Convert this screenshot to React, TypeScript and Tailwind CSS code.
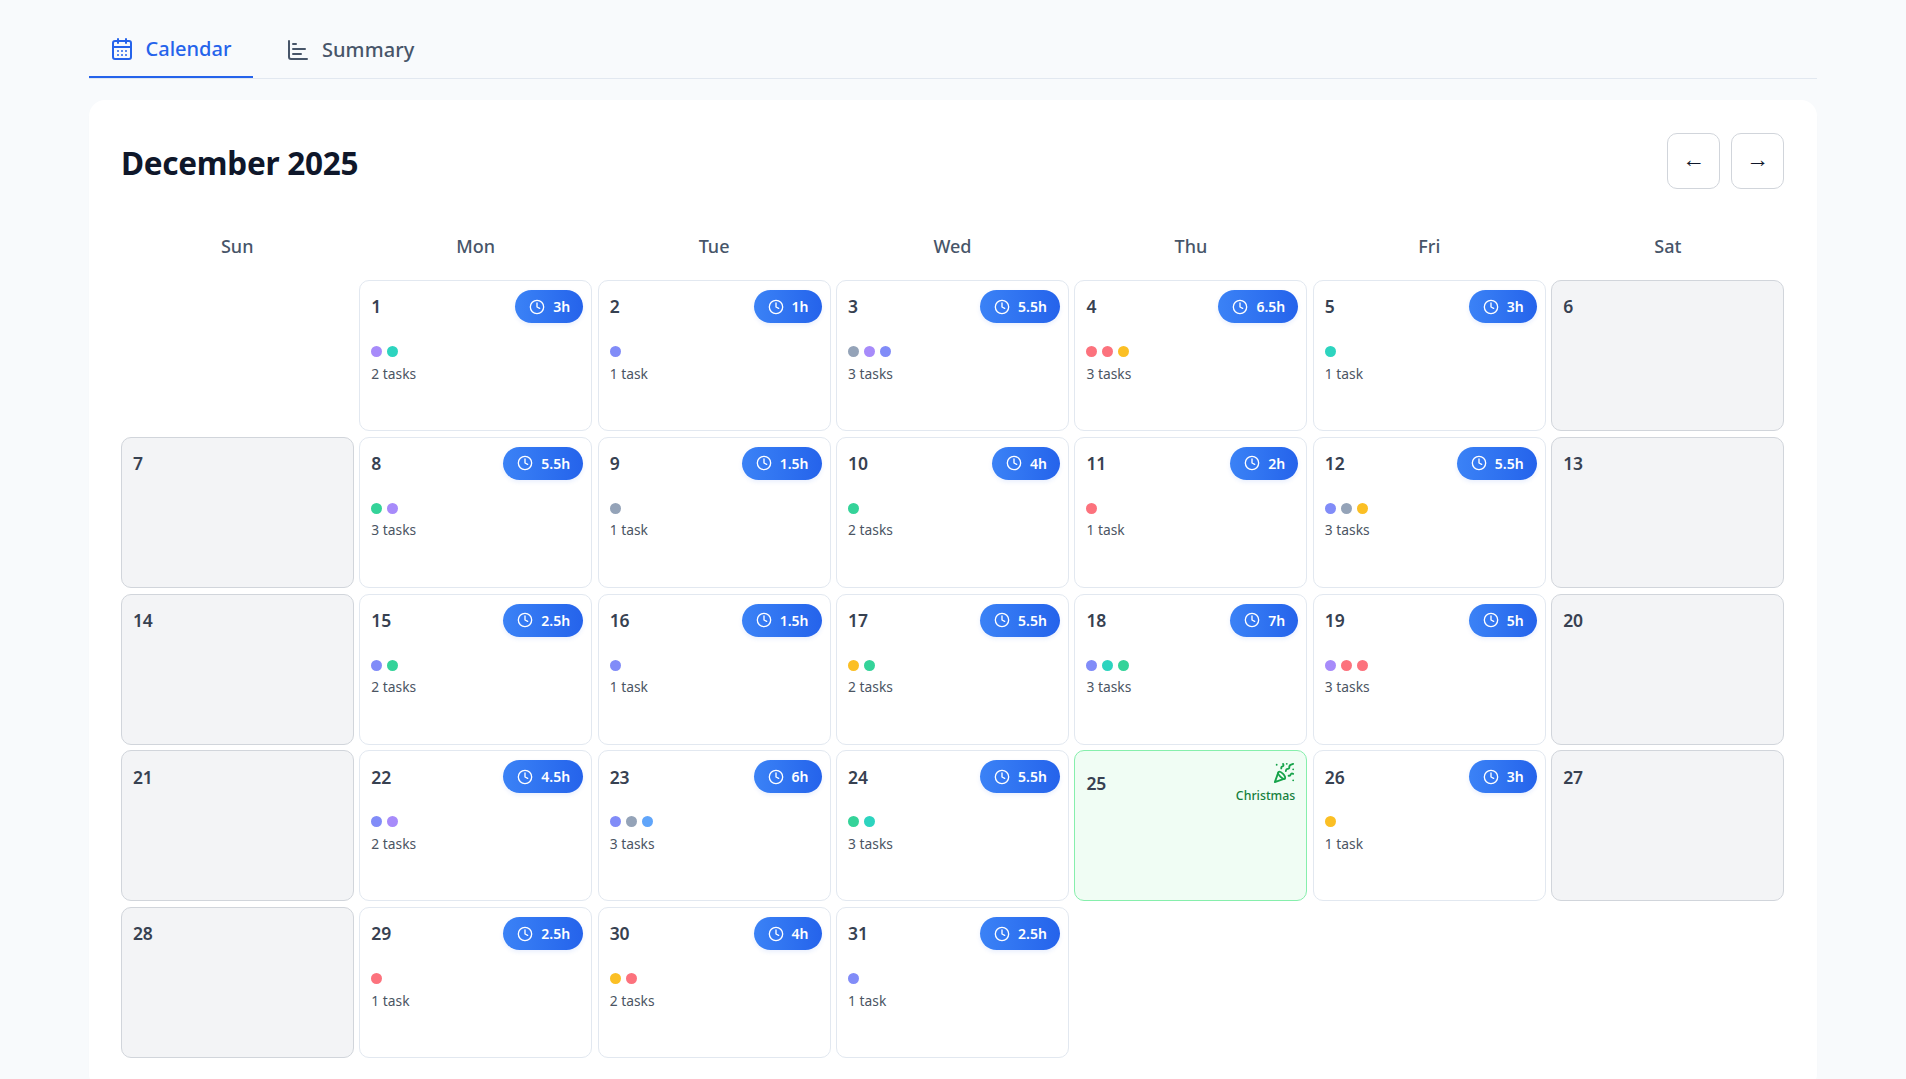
import { CalendarDays, ChartBar, Clock, PartyPopper } from "lucide-react";

// --- Types ---
type Day = {
  hours: string;
  tasks: number;
  dots: string[];
};

const PURPLE = "bg-[#a78bfa]";
const TEAL = "bg-[#2dd4bf]";
const INDIGO = "bg-[#818cf8]";
const GRAY = "bg-[#94a3b8]";
const RED = "bg-[#fc727d]";
const AMBER = "bg-[#fbbf24]";
const GREEN = "bg-[#34d399]";
const BLUE = "bg-[#60a5fa]";

const WEEKDAYS = ["Sun", "Mon", "Tue", "Wed", "Thu", "Fri", "Sat"];

const DAYS: Record<number, Day> = {
  1: { hours: "3h", tasks: 2, dots: [PURPLE, TEAL] },
  2: { hours: "1h", tasks: 1, dots: [INDIGO] },
  3: { hours: "5.5h", tasks: 3, dots: [GRAY, PURPLE, INDIGO] },
  4: { hours: "6.5h", tasks: 3, dots: [RED, RED, AMBER] },
  5: { hours: "3h", tasks: 1, dots: [TEAL] },
  8: { hours: "5.5h", tasks: 3, dots: [GREEN, PURPLE] },
  9: { hours: "1.5h", tasks: 1, dots: [GRAY] },
  10: { hours: "4h", tasks: 2, dots: [GREEN] },
  11: { hours: "2h", tasks: 1, dots: [RED] },
  12: { hours: "5.5h", tasks: 3, dots: [INDIGO, GRAY, AMBER] },
  15: { hours: "2.5h", tasks: 2, dots: [INDIGO, GREEN] },
  16: { hours: "1.5h", tasks: 1, dots: [INDIGO] },
  17: { hours: "5.5h", tasks: 2, dots: [AMBER, GREEN] },
  18: { hours: "7h", tasks: 3, dots: [INDIGO, TEAL, GREEN] },
  19: { hours: "5h", tasks: 3, dots: [PURPLE, RED, RED] },
  22: { hours: "4.5h", tasks: 2, dots: [INDIGO, PURPLE] },
  23: { hours: "6h", tasks: 3, dots: [INDIGO, GRAY, BLUE] },
  24: { hours: "5.5h", tasks: 3, dots: [GREEN, TEAL] },
  26: { hours: "3h", tasks: 1, dots: [AMBER] },
  29: { hours: "2.5h", tasks: 1, dots: [RED] },
  30: { hours: "4h", tasks: 2, dots: [AMBER, RED] },
  31: { hours: "2.5h", tasks: 1, dots: [INDIGO] },
};

const HoursBadge = ({ hours }: { hours: string }) => (
  <div className="flex h-[33px] items-center gap-[8px] rounded-full bg-gradient-to-r from-[#3b82f6] to-[#2563eb] pl-[14px] pr-[13px] text-[14px] font-semibold text-white shadow-[0_2px_4px_rgba(37,99,235,0.1)]">
    <Clock className="h-[16px] w-[16px]" strokeWidth={2} />
    <span>{hours}</span>
  </div>
);

const WorkCell = ({ date, day }: { date: number; day: Day }) => (
  <div className="rounded-[10px] border border-[#e2e8f0] bg-white pl-[11px] pr-[8px] pt-[9px]">
    <div className="flex items-center justify-between">
      <span className="text-[17.5px] font-semibold tracking-[-0.2px] text-[#374151]">{date}</span>
      <HoursBadge hours={day.hours} />
    </div>
    <div className="mt-[23px] flex gap-[5px]">
      {day.dots.map((dot, i) => (
        <span key={i} className={`h-[11px] w-[11px] rounded-full ${dot}`} />
      ))}
    </div>
    <div className="mt-[6.5px] text-[13.8px] leading-[20px] text-[#4b5563]">
      {day.tasks} {day.tasks === 1 ? "task" : "tasks"}
    </div>
  </div>
);

const WeekendCell = ({ date }: { date: number }) => (
  <div className="rounded-[10px] border border-[#d1d5db] bg-[#f3f4f6] pl-[11px] pt-[9px]">
    <div className="flex h-[33px] items-center text-[17.5px] font-semibold tracking-[-0.2px] text-[#374151]">{date}</div>
  </div>
);

const HolidayCell = ({ date, name }: { date: number; name: string }) => (
  <div className="rounded-[10px] border border-[#86efac] bg-[#f0fdf4] px-[11px] pt-[11px]">
    <div className="flex items-center justify-between">
      <span className="text-[17.5px] font-semibold tracking-[-0.2px] text-[#374151]">{date}</span>
      <div className="flex flex-col items-end">
        <PartyPopper className="mb-[4px] h-[22px] w-[22px] text-[#16a34a]" strokeWidth={2} />
        <span className="text-[12.3px] font-medium leading-[16px] text-[#15803d]">{name}</span>
      </div>
    </div>
  </div>
);

export default function App() {
  const blanks = [0];
  const dates = Array.from({ length: 31 }, (_, i) => i + 1);

  return (
    <div className="h-screen overflow-hidden bg-[#f8fafc] px-[89px] font-['Noto_Sans',sans-serif]">
      {/* --- TABS --- */}
      <div className="flex h-[79px] items-stretch gap-[12px] border-b border-[#e2e8f0] pt-[22px]">
        <button className="flex items-center gap-[11.5px] border-b-2 border-[#2563eb] pl-[21px] pr-[21.5px] text-[20px] font-medium text-[#2563eb]">
          <CalendarDays className="h-[24px] w-[24px]" strokeWidth={2} />
          Calendar
        </button>
        <button className="flex items-center gap-[12px] px-[21px] text-[20px] font-medium tracking-[0.1px] text-[#475569]">
          <ChartBar className="h-[24px] w-[24px]" strokeWidth={2} />
          Summary
        </button>
      </div>

      {/* --- CALENDAR CARD --- */}
      <div className="mt-[21px] rounded-[16px] bg-white pb-[32px] pl-[32px] pr-[33px] pt-[33px] shadow-[0_1px_3px_rgba(0,0,0,0.01)]">
        <div className="flex items-center justify-between">
          <h1 className="pt-[4px] text-[31.5px] font-bold tracking-[-0.27px] text-[#0f172a]">December 2025</h1>
          <div className="flex gap-[11px]">
            <button className="flex h-[56px] w-[53px] items-center justify-center rounded-[10px] border border-[#d1d5db] pb-[5px] text-[23px] text-[#0f172a]">←</button>
            <button className="flex h-[56px] w-[53px] items-center justify-center rounded-[10px] border border-[#d1d5db] pb-[5px] text-[23px] text-[#0f172a]">→</button>
          </div>
        </div>

        <div className="mt-[43px] grid grid-cols-7 gap-x-[6px]">
          {WEEKDAYS.map((name) => (
            <div key={name} className="text-center text-[18px] font-medium leading-[28px] text-[#475569]">
              {name}
            </div>
          ))}
        </div>

        <div className="mt-[20px] grid grid-cols-7 auto-rows-[151px] gap-x-[5.6px] gap-y-[5.75px]">
          {blanks.map((b) => (
            <div key={b} />
          ))}
          {dates.map((date) => {
            const dow = (date - 1 + blanks.length) % 7;
            if (date === 25) return <HolidayCell key={date} date={date} name="Christmas" />;
            if (dow === 0 || dow === 6) return <WeekendCell key={date} date={date} />;
            return <WorkCell key={date} date={date} day={DAYS[date]} />;
          })}
        </div>
      </div>
    </div>
  );
}
